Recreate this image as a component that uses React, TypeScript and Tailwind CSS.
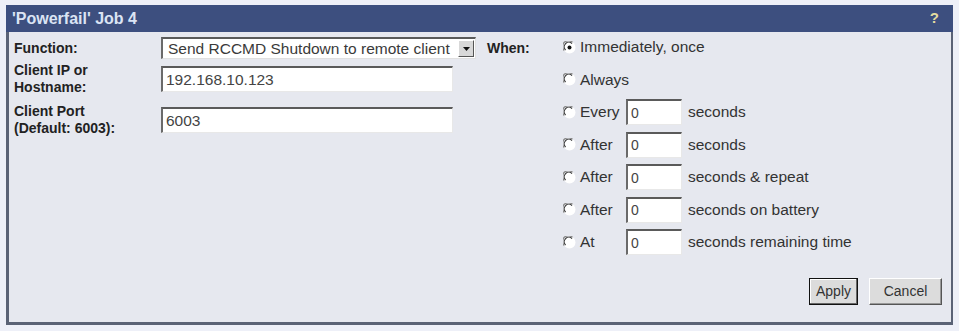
import React from 'react';

const font = { fontFamily: '"Liberation Sans", Arial, sans-serif' };

const Radio = ({ checked }: { checked?: boolean }) => (
  <svg width="13" height="13" viewBox="0 0 13 13" className="shrink-0">
    <circle cx="6.5" cy="6.5" r="6" fill="#ffffff" />
    <path d="M1.3 9.5 A5.6 5.6 0 0 1 9.5 1.3" stroke="#8a8a8a" strokeWidth="1.3" fill="none" />
    <path d="M2.6 9 A4.4 4.4 0 0 1 9 2.6" stroke="#333333" strokeWidth="1.1" fill="none" />
    {checked && <circle cx="6.5" cy="6.5" r="2" fill="#111111" />}
  </svg>
);

const textBox = 'h-[26px] bg-white border-t-2 border-l-2 border-t-[#5a5a5a] border-l-[#6a6a6a] border-b border-r border-b-[#e8e8e8] border-r-[#e8e8e8] px-[3px] text-[14px] text-[#444] outline-none';

const options = [
  { label: 'Immediately, once', checked: true },
  { label: 'Always' },
  { label: 'Every', unit: 'seconds' },
  { label: 'After', unit: 'seconds' },
  { label: 'After', unit: 'seconds & repeat' },
  { label: 'After', unit: 'seconds on battery' },
  { label: 'At', unit: 'seconds remaining time' },
];

export default function App() {
  return (
    <div className="w-[959px] h-[331px] bg-[#eef0f8] pt-[5px] px-[6px] text-[#222]" style={font}>
      <div className="w-[947px] h-[320px] flex flex-col border-l-[3px] border-r-2 border-b-[3px] border-[#5b6376] bg-[#e6e8ef]">
        <div className="h-[27px] shrink-0 bg-[#3d4f7f] flex items-center justify-between pl-[3px] pr-[14px] -ml-[3px] -mr-[2px]">
          <span className="text-[16px] font-bold text-[#dbe4f4] pl-[3px]">'Powerfail' Job 4</span>
          <span className="text-[15px] font-bold text-[#e4dca0]">?</span>
        </div>
        <div className="flex-1 flex flex-col pl-[5px] pr-[9px]">
          <div className="flex items-start">
            <div className="w-[473px] grid grid-cols-[147px_315px] content-start pt-[5px] gap-y-[2px]">
              <div className="h-[22px] flex items-center text-[14px] font-bold">Function:</div>
              <div className="h-[22px] flex bg-white border-t-2 border-l-2 border-t-[#5a5a5a] border-l-[#6a6a6a] border-b border-r border-b-[#e0e0e0] border-r-[#e0e0e0]">
                <span className="flex-1 flex items-center pl-[5px] text-[15.5px] text-[#3a3a3a] whitespace-nowrap overflow-hidden">
                  Send RCCMD Shutdown to remote client
                </span>
                <span className="w-[16px] m-[1px] flex items-center justify-center bg-[#d8d8d8] border border-t-white border-l-white border-b-[#555] border-r-[#555]">
                  <svg width="7" height="4" viewBox="0 0 7 4">
                    <path d="M0 0 H7 L3.5 4 Z" fill="#111" />
                  </svg>
                </span>
              </div>
              <div className="h-[36px] flex flex-col justify-center text-[14px] font-bold leading-[17px]">
                <span>Client IP or</span>
                <span>Hostname:</span>
              </div>
              <div className="h-[36px] flex items-center">
                <input className={`w-[292px] ${textBox} text-[15.5px]`} defaultValue="192.168.10.123" style={font} />
              </div>
              <div className="h-[38px] mt-[2px] flex flex-col justify-center text-[14px] font-bold leading-[17px]">
                <span>Client Port</span>
                <span>(Default: 6003):</span>
              </div>
              <div className="h-[38px] mt-[2px] flex items-center">
                <input className={`w-[292px] ${textBox} text-[15.5px]`} defaultValue="6003" style={font} />
              </div>
            </div>
            <div className="flex pt-[2px]">
              <div className="w-[76px] pt-[4px] text-[14px] font-bold">When:</div>
              <div className="flex flex-col gap-[6.5px]">
                {options.map((o, i) => (
                  <div key={i} className="h-[26px] flex items-center">
                    <Radio checked={o.checked} />
                    <span className="ml-[4px] text-[15.5px] text-[#333] whitespace-nowrap w-[46px]">{o.label}</span>
                    {o.unit && (
                      <>
                        <input className={`w-[56px] ${textBox}`} defaultValue="0" style={font} />
                        <span className="ml-[6px] text-[15.5px] text-[#333] whitespace-nowrap">{o.unit}</span>
                      </>
                    )}
                  </div>
                ))}
              </div>
            </div>
          </div>
          <div className="flex justify-end gap-[11px] mt-[23px]">
            <button className="w-[49px] h-[27px] bg-[#dcdcdc] border border-[#111] shadow-[inset_-1px_-1px_0_#666,inset_1px_1px_0_#fff] text-[14px] text-[#333]" style={font}>
              Apply
            </button>
            <button className="w-[73px] h-[27px] bg-[#dcdcdc] border border-t-white border-l-white border-b-[#555] border-r-[#555] shadow-[inset_-1px_-1px_0_#999] text-[14px] text-[#333]" style={font}>
              Cancel
            </button>
          </div>
        </div>
      </div>
    </div>
  );
}
